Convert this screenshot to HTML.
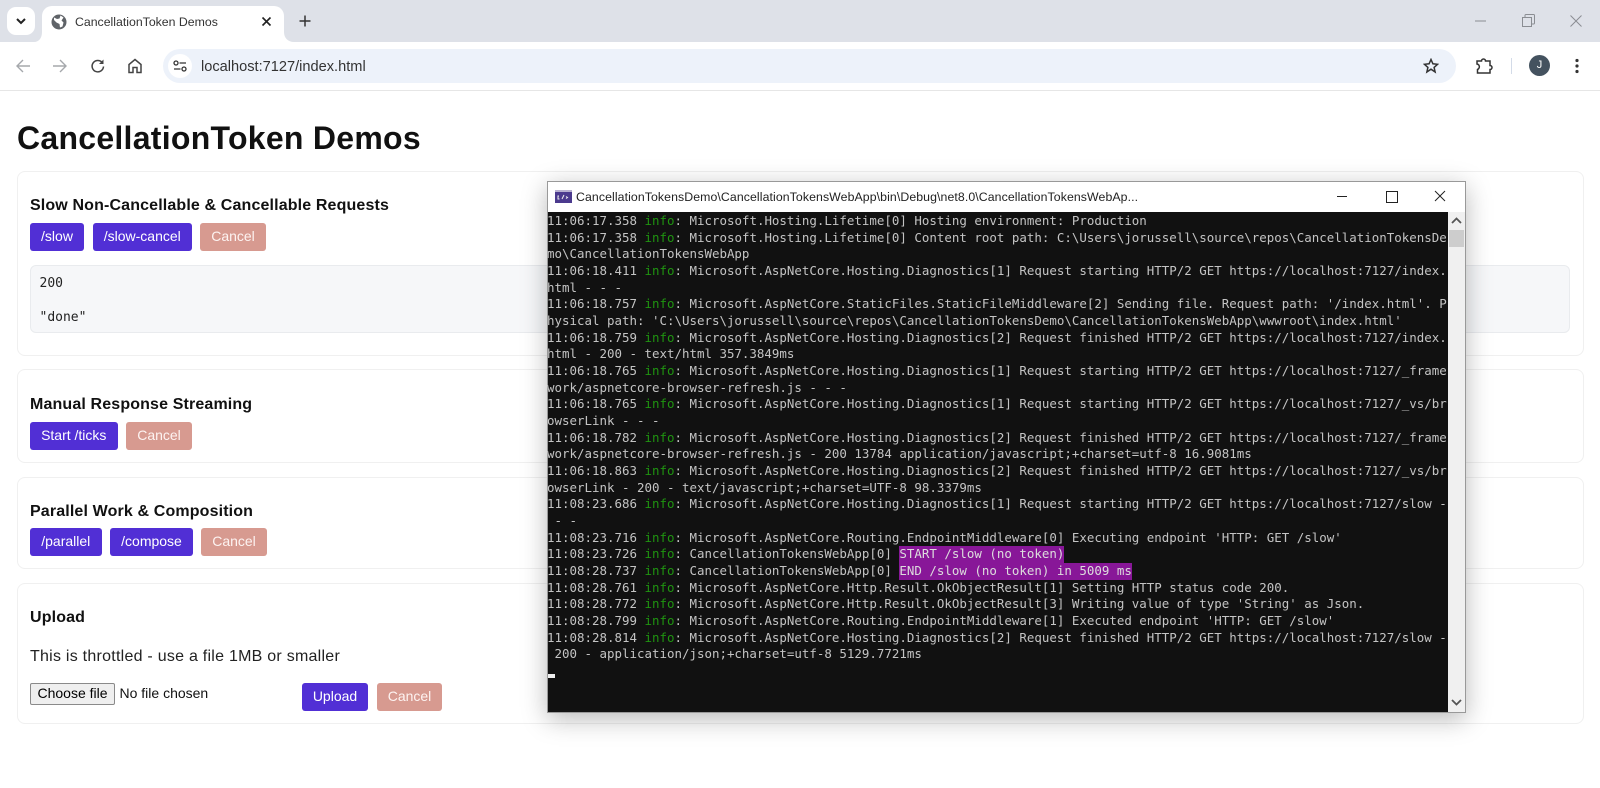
<!DOCTYPE html>
<html><head><meta charset="utf-8"><title>CancellationToken Demos</title>
<style>
html,body{margin:0;padding:0;width:1600px;height:788px;overflow:hidden;background:#fff;font-family:"Liberation Sans",sans-serif;color:#1a1a1a}
.a{position:absolute;white-space:nowrap}
.card{position:absolute;left:17px;width:1567px;border:1px solid #f0f0f0;border-radius:8px;box-sizing:border-box;background:#fff}
h3{position:absolute;left:30px;margin:0;font-size:16px;letter-spacing:.14px;line-height:20px;font-weight:700;color:#111;white-space:nowrap}
.b{position:absolute;height:28px;line-height:27px;text-align:center;color:#fff;font-size:14px;background:#512fd5;border-radius:3px;box-sizing:border-box}
.c{background:#d79a90;color:#fdf3f1}
#con{position:absolute;left:547px;top:213px;width:900px;height:500px;font:12.46px/16.67px "DejaVu Sans Mono","Liberation Mono",monospace;color:#c4c4c4;white-space:pre;overflow:hidden}
#con i{font-style:normal;color:#1f9410}
#con b{font-weight:400;background:#881798;color:#ddd;display:inline-block;height:16.67px;vertical-align:top}
</style></head><body>
<!-- browser chrome -->
<div class="a" style="left:0;top:0;width:1600px;height:42px;background:#dee1e8"></div>
<div class="a" style="left:0;top:42px;width:1600px;height:48px;background:#fff;border-radius:10px 10px 0 0"></div>
<div class="a" style="left:0;top:90px;width:1600px;height:1px;background:#e6e6e6"></div>
<div class="a" style="left:7px;top:7px;width:28px;height:28px;background:#fff;border-radius:9px"></div>
<svg class="a" style="left:15px;top:15px" width="12" height="12" viewBox="0 0 12 12"><path d="M2 4l4 4 4-4" fill="none" stroke="#222" stroke-width="2"/></svg>
<div class="a" style="left:42px;top:6px;width:242px;height:36px;background:#fff;border-radius:10px 10px 0 0"></div>
<svg class="a" style="left:34px;top:32px" width="8" height="10"><path d="M8 0v10H0C5 10 8 6 8 0z" fill="#fff"/></svg>
<svg class="a" style="left:284px;top:32px" width="10" height="10"><path d="M0 0v10h10C4 10 0 6 0 0z" fill="#fff"/></svg>
<svg class="a" style="left:51px;top:14px" width="16" height="16" viewBox="0 0 16 16"><circle cx="8" cy="8" r="7.5" fill="#5f6368"/><path d="M3 3.500l3 1.500 2.500-.5 1-3 3 2-2 3 2 2-1 4-2.500 1-.5-3.500-3-1.500-2.500-2.500z" fill="#fff"/></svg>
<div class="a" style="left:75px;top:14px;font-size:12.3px;line-height:16px;color:#333">CancellationToken Demos</div>
<svg class="a" style="left:261px;top:16px" width="11" height="11"><path d="M1.500 1.500l8 8M9.500 1.500l-8 8" stroke="#222" stroke-width="1.600"/></svg>
<svg class="a" style="left:299px;top:15px" width="12" height="12"><path d="M6 .5v11M.5 6h11" stroke="#333" stroke-width="1.500"/></svg>
<svg class="a" style="left:1475px;top:20px" width="12" height="2"><path d="M0 1h11" stroke="#8a8d92" stroke-width="1"/></svg>
<svg class="a" style="left:1522px;top:14px" width="13" height="13"><path d="M.5 3.500h9v9h-9zM3 3.500V1.500a1 1 0 0 1 1-1h7.500a1 1 0 0 1 1 1V9a1 1 0 0 1-1 1h-2" fill="none" stroke="#8a8d92"/></svg>
<svg class="a" style="left:1570px;top:15px" width="12" height="12"><path d="M.5.5l11 11M11.500.5l-11 11" stroke="#8a8d92"/></svg>
<!-- nav icons -->
<svg class="a" style="left:15px;top:58px" width="16" height="16"><path d="M15 8H2M8 2L2 8l6 6" fill="none" stroke="#a5a8ac" stroke-width="1.400"/></svg>
<svg class="a" style="left:52px;top:58px" width="16" height="16"><path d="M1 8h13M8 2l6 6-6 6" fill="none" stroke="#a5a8ac" stroke-width="1.400"/></svg>
<svg class="a" style="left:90px;top:58px" width="16" height="16"><path d="M13.500 8.500A5.700 5.700 0 1 1 12 4.300" fill="none" stroke="#444" stroke-width="1.500"/><path d="M13.500 1.500v4.500H9z" fill="#444"/></svg>
<svg class="a" style="left:127px;top:58px" width="16" height="16"><path d="M2 14.500V6.500L8 1.500l6 5v8h-4v-5H6v5z" fill="none" stroke="#444" stroke-width="1.500"/></svg>
<div class="a" style="left:163px;top:49px;width:1293px;height:34px;background:#edf2fa;border-radius:17px"></div>
<div class="a" style="left:168px;top:54px;width:24px;height:24px;background:#fff;border-radius:12px"></div>
<svg class="a" style="left:173px;top:60px" width="14" height="12"><circle cx="3" cy="3" r="2" fill="none" stroke="#333" stroke-width="1.300"/><path d="M6.500 3H13M1 9h6.500" stroke="#333" stroke-width="1.300"/><circle cx="11" cy="9" r="2" fill="none" stroke="#333" stroke-width="1.300"/></svg>
<div class="a" style="left:201px;top:58px;font-size:14.6px;line-height:18px;color:#333">localhost:7127/index.html</div>
<svg class="a" style="left:1423px;top:58px" width="16" height="16" viewBox="0 0 16 16"><path d="M8 1.500l1.900 4.300 4.700.5-3.500 3.100 1 4.600L8 11.200l-4.100 2.800 1-4.600L1.400 6.300l4.700-.5z" fill="none" stroke="#333" stroke-width="1.500"/></svg>
<svg class="a" style="left:1475px;top:57px" width="19" height="18" viewBox="0 0 19 18"><path d="M2 4h4.500a2 2 0 0 1 4 0H15v4.500a2 2 0 0 1 0 4V16H2.500v-3.500a3 3 0 0 0 1.500-4.200A3 3 0 0 0 2 7z" fill="none" stroke="#333" stroke-width="1.500"/></svg>
<div class="a" style="left:1511px;top:58px;width:1px;height:16px;background:#d3dbe8"></div>
<div class="a" style="left:1529px;top:55px;width:21px;height:21px;border-radius:50%;background:#44525f;color:#fff;font-size:11px;line-height:21px;text-align:center">J</div>
<svg class="a" style="left:1574px;top:58px" width="6" height="16"><circle cx="3" cy="2.500" r="1.600" fill="#333"/><circle cx="3" cy="8" r="1.600" fill="#333"/><circle cx="3" cy="13.500" r="1.600" fill="#333"/></svg>

<!-- page -->
<div class="a" style="left:17px;top:119px;font-size:32px;letter-spacing:.27px;line-height:38px;font-weight:700;color:#111">CancellationToken Demos</div>
<div class="card" style="top:170.500px;height:185.500px"></div>
<div class="card" style="top:369px;height:94px"></div>
<div class="card" style="top:476.500px;height:92.500px"></div>
<div class="card" style="top:583px;height:141px"></div>

<h3 style="top:196px">Slow Non-Cancellable &amp; Cancellable Requests</h3>
<div class="b" style="left:30px;top:223px;width:54px">/slow</div>
<div class="b" style="left:92.500px;top:223px;width:99.500px">/slow-cancel</div>
<div class="b c" style="left:200px;top:223px;width:66px">Cancel</div>
<div class="a" style="left:30px;top:265px;width:1540px;height:68px;background:#f6f7f9;border:1px solid #e9ebee;border-radius:6px;box-sizing:border-box"></div>
<div class="a" style="left:39.500px;top:275px;font:13px/17px 'DejaVu Sans Mono','Liberation Mono',monospace;color:#222">200</div>
<div class="a" style="left:39.500px;top:309px;font:13px/17px 'DejaVu Sans Mono','Liberation Mono',monospace;color:#222">"done"</div>

<h3 style="top:395px">Manual Response Streaming</h3>
<div class="b" style="left:30px;top:422px;width:87.500px">Start /ticks</div>
<div class="b c" style="left:126px;top:422px;width:66px">Cancel</div>

<h3 style="top:502px">Parallel Work &amp; Composition</h3>
<div class="b" style="left:30px;top:528px;width:71.500px">/parallel</div>
<div class="b" style="left:110px;top:528px;width:83px">/compose</div>
<div class="b c" style="left:201px;top:528px;width:66px">Cancel</div>

<h3 style="top:608px">Upload</h3>
<div class="a" style="left:30px;top:647px;font-size:16px;letter-spacing:.25px;line-height:19px;color:#222">This is throttled - use a file 1MB or smaller</div>
<div class="a" style="left:30px;top:683px;width:85px;height:22px;background:#efefef;border:1px solid #8a8a8a;border-radius:2px;box-sizing:border-box;font-size:14px;line-height:19px;text-align:center;color:#000">Choose file</div>
<div class="a" style="left:119.500px;top:684px;font-size:14px;line-height:18px;color:#111">No file chosen</div>
<div class="b" style="left:302px;top:683px;width:66px">Upload</div>
<div class="b c" style="left:377px;top:683px;width:65px">Cancel</div>

<!-- console window -->
<div class="a" style="left:546.500px;top:180.500px;width:919px;height:532px;background:#fff;border:1px solid #999;box-sizing:border-box;box-shadow:0 6px 24px rgba(0,0,0,.28)"></div>
<div class="a" style="left:547.500px;top:212px;width:900px;height:499.500px;background:#111"></div>
<div class="a" style="left:1448px;top:212px;width:17px;height:500px;background:#f0f0f0"></div>
<div class="a" style="left:1449px;top:230px;width:15px;height:17px;background:#cdcdcd"></div>
<svg class="a" style="left:1451px;top:217px" width="11" height="7"><path d="M1 6l4.500-4.500L10 6" fill="none" stroke="#555" stroke-width="1.800"/></svg>
<svg class="a" style="left:1451px;top:699px" width="11" height="7"><path d="M1 1l4.500 4.500L10 1" fill="none" stroke="#555" stroke-width="1.800"/></svg>
<svg class="a" style="left:555px;top:190px" width="17" height="13"><rect width="17" height="13" fill="#4b3a8e"/><rect y="0" width="17" height="2" fill="#b7b0d0"/><path d="M4 6H3v3h1.500M7 9l2-4M11 6.500l1.500 1-1.500 1" fill="none" stroke="#eee"/></svg>
<div class="a" style="left:576px;top:189px;font-size:12.3px;letter-spacing:.09px;line-height:16px;color:#222">CancellationTokensDemo\CancellationTokensWebApp\bin\Debug\net8.0\CancellationTokensWebAp...</div>
<div class="a" style="left:1337px;top:196px;width:10px;height:1px;background:#222"></div>
<div class="a" style="left:1386px;top:191px;width:10px;height:10px;border:1px solid #222"></div>
<svg class="a" style="left:1434px;top:190px" width="12" height="12"><path d="M1 1l10 10M11 1L1 11" stroke="#222" stroke-width="1"/></svg>
<div id="con">11:06:17.358 <i>info</i>: Microsoft.Hosting.Lifetime[0] Hosting environment: Production
11:06:17.358 <i>info</i>: Microsoft.Hosting.Lifetime[0] Content root path: C:\Users\jorussell\source\repos\CancellationTokensDe
mo\CancellationTokensWebApp
11:06:18.411 <i>info</i>: Microsoft.AspNetCore.Hosting.Diagnostics[1] Request starting HTTP/2 GET https://localhost:7127/index.
html - - -
11:06:18.757 <i>info</i>: Microsoft.AspNetCore.StaticFiles.StaticFileMiddleware[2] Sending file. Request path: '/index.html'. P
hysical path: 'C:\Users\jorussell\source\repos\CancellationTokensDemo\CancellationTokensWebApp\wwwroot\index.html'
11:06:18.759 <i>info</i>: Microsoft.AspNetCore.Hosting.Diagnostics[2] Request finished HTTP/2 GET https://localhost:7127/index.
html - 200 - text/html 357.3849ms
11:06:18.765 <i>info</i>: Microsoft.AspNetCore.Hosting.Diagnostics[1] Request starting HTTP/2 GET https://localhost:7127/_frame
work/aspnetcore-browser-refresh.js - - -
11:06:18.765 <i>info</i>: Microsoft.AspNetCore.Hosting.Diagnostics[1] Request starting HTTP/2 GET https://localhost:7127/_vs/br
owserLink - - -
11:06:18.782 <i>info</i>: Microsoft.AspNetCore.Hosting.Diagnostics[2] Request finished HTTP/2 GET https://localhost:7127/_frame
work/aspnetcore-browser-refresh.js - 200 13784 application/javascript;+charset=utf-8 16.9081ms
11:06:18.863 <i>info</i>: Microsoft.AspNetCore.Hosting.Diagnostics[2] Request finished HTTP/2 GET https://localhost:7127/_vs/br
owserLink - 200 - text/javascript;+charset=UTF-8 98.3379ms
11:08:23.686 <i>info</i>: Microsoft.AspNetCore.Hosting.Diagnostics[1] Request starting HTTP/2 GET https://localhost:7127/slow -
 - -
11:08:23.716 <i>info</i>: Microsoft.AspNetCore.Routing.EndpointMiddleware[0] Executing endpoint 'HTTP: GET /slow'
11:08:23.726 <i>info</i>: CancellationTokensWebApp[0] <b>START /slow (no token)</b>
11:08:28.737 <i>info</i>: CancellationTokensWebApp[0] <b>END /slow (no token) in 5009 ms</b>
11:08:28.761 <i>info</i>: Microsoft.AspNetCore.Http.Result.OkObjectResult[1] Setting HTTP status code 200.
11:08:28.772 <i>info</i>: Microsoft.AspNetCore.Http.Result.OkObjectResult[3] Writing value of type 'String' as Json.
11:08:28.799 <i>info</i>: Microsoft.AspNetCore.Routing.EndpointMiddleware[1] Executed endpoint 'HTTP: GET /slow'
11:08:28.814 <i>info</i>: Microsoft.AspNetCore.Hosting.Diagnostics[2] Request finished HTTP/2 GET https://localhost:7127/slow -
 200 - application/json;+charset=utf-8 5129.7721ms</div>
<div class="a" style="left:547.500px;top:674px;width:7.500px;height:4px;background:#eee"></div>
</body></html>
